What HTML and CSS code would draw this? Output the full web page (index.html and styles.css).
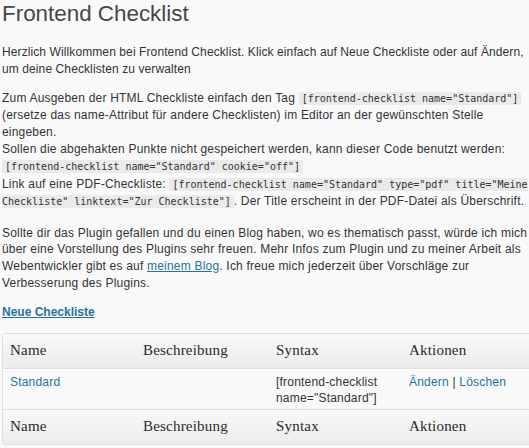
FILE: index.html
```html
<!DOCTYPE html>
<html lang="de">
<head>
<meta charset="utf-8">
<title>Frontend Checklist</title>
<link rel="stylesheet" href="styles.css">
</head>
<body>
<div class="wrap">
  <h2 class="page-title">Frontend Checklist</h2>
  <p class="intro">Herzlich Willkommen bei Frontend Checklist. Klick einfach auf Neue Checkliste oder auf Ändern, um deine Checklisten zu verwalten</p>
  <p class="usage">Zum Ausgeben der HTML Checkliste einfach den Tag <code>[frontend-checklist name="Standard"]</code> (ersetze das name-Attribut für andere Checklisten) im Editor an der gewünschten Stelle eingeben.<br>Sollen die abgehakten Punkte nicht gespeichert werden, kann dieser Code benutzt werden:<br><code>[frontend-checklist name="Standard" cookie="off"]</code><br>Link auf eine PDF-Checkliste: <code>[frontend-checklist name="Standard" type="pdf" title="Meine Checkliste" linktext="Zur Checkliste"]</code>. Der Title erscheint in der PDF-Datei als Überschrift.</p>
  <p class="promo">Sollte dir das Plugin gefallen und du einen Blog haben, wo es thematisch passt, würde ich mich über eine Vorstellung des Plugins sehr freuen. Mehr Infos zum Plugin und zu meiner Arbeit als Webentwickler gibt es auf <a href="#" class="link">meinem Blog</a>. Ich freue mich jederzeit über Vorschläge zur Verbesserung des Plugins.</p>
  <p class="actions"><a href="#" class="link new-link">Neue Checkliste</a></p>
  <table class="list-table">
    <colgroup><col class="col"><col class="col"><col class="col"><col class="col"></colgroup>
    <thead>
      <tr><th>Name</th><th>Beschreibung</th><th>Syntax</th><th>Aktionen</th></tr>
    </thead>
    <tbody>
      <tr>
        <td><a href="#" class="cell-link">Standard</a></td>
        <td></td>
        <td>[frontend-checklist name="Standard"]</td>
        <td><a href="#" class="cell-link">Ändern</a> | <a href="#" class="cell-link">Löschen</a></td>
      </tr>
    </tbody>
    <tfoot>
      <tr><th>Name</th><th>Beschreibung</th><th>Syntax</th><th>Aktionen</th></tr>
    </tfoot>
  </table>
</div>
</body>
</html>
```
FILE: styles.css
```css
html, body {
  margin: 0;
  padding: 0;
  background: #f9f9f9;
  overflow: hidden;
}
body {
  font-family: "Liberation Sans", Arial, sans-serif;
  font-size: 12px;
  line-height: 16.8px;
  letter-spacing: 0.2px;
  color: #333;
}
.wrap {
  width: 531px;
  padding-left: 2px;
}
.page-title {
  margin: 0 0 17px;
  padding: 0;
  font-family: "Liberation Sans", Arial, sans-serif;
  font-weight: normal;
  font-size: 22.4px;
  line-height: 27px;
  letter-spacing: 0;
  color: #464646;
}
.wrap p {
  margin: 12px 0;
}
.wrap .intro {
  letter-spacing: 0.1px;
}
.wrap .promo {
  margin-top: 13.5px;
}
.wrap .actions {
  margin-top: 11px;
}
code {
  font-family: "DejaVu Sans Mono", monospace;
  font-size: 10px;
  letter-spacing: 0;
  background: #eaeaea;
  padding: 1px 3px;
}
.link {
  color: #21759b;
  text-decoration: underline;
}
.new-link {
  font-weight: bold;
  letter-spacing: 0;
}
.list-table {
  margin-top: 12px;
  table-layout: fixed;
  width: 534px;
  border-collapse: separate;
  border-spacing: 0;
  border: 1px solid #dfdfdf;
  border-radius: 3px;
  background: #f9f9f9;
}
.col {
  width: 133px;
}
.list-table th {
  text-align: left;
  font-family: "Liberation Serif", Georgia, serif;
  font-weight: normal;
  font-size: 15px;
  line-height: 19px;
  letter-spacing: 0.2px;
  color: #2a2a2a;
  padding: 7px 7px 8px;
  background: linear-gradient(to top, #ececec, #f9f9f9);
}
.list-table thead th {
  border-bottom: 1px solid #dfdfdf;
}
.list-table td {
  vertical-align: top;
  padding: 4px 7px 2px;
  font-size: 12px;
  line-height: 16.8px;
  border-top: 1px solid #fff;
  border-bottom: 1px solid #dfdfdf;
  overflow-wrap: break-word;
}
.cell-link {
  color: #21759b;
  text-decoration: none;
}
```
